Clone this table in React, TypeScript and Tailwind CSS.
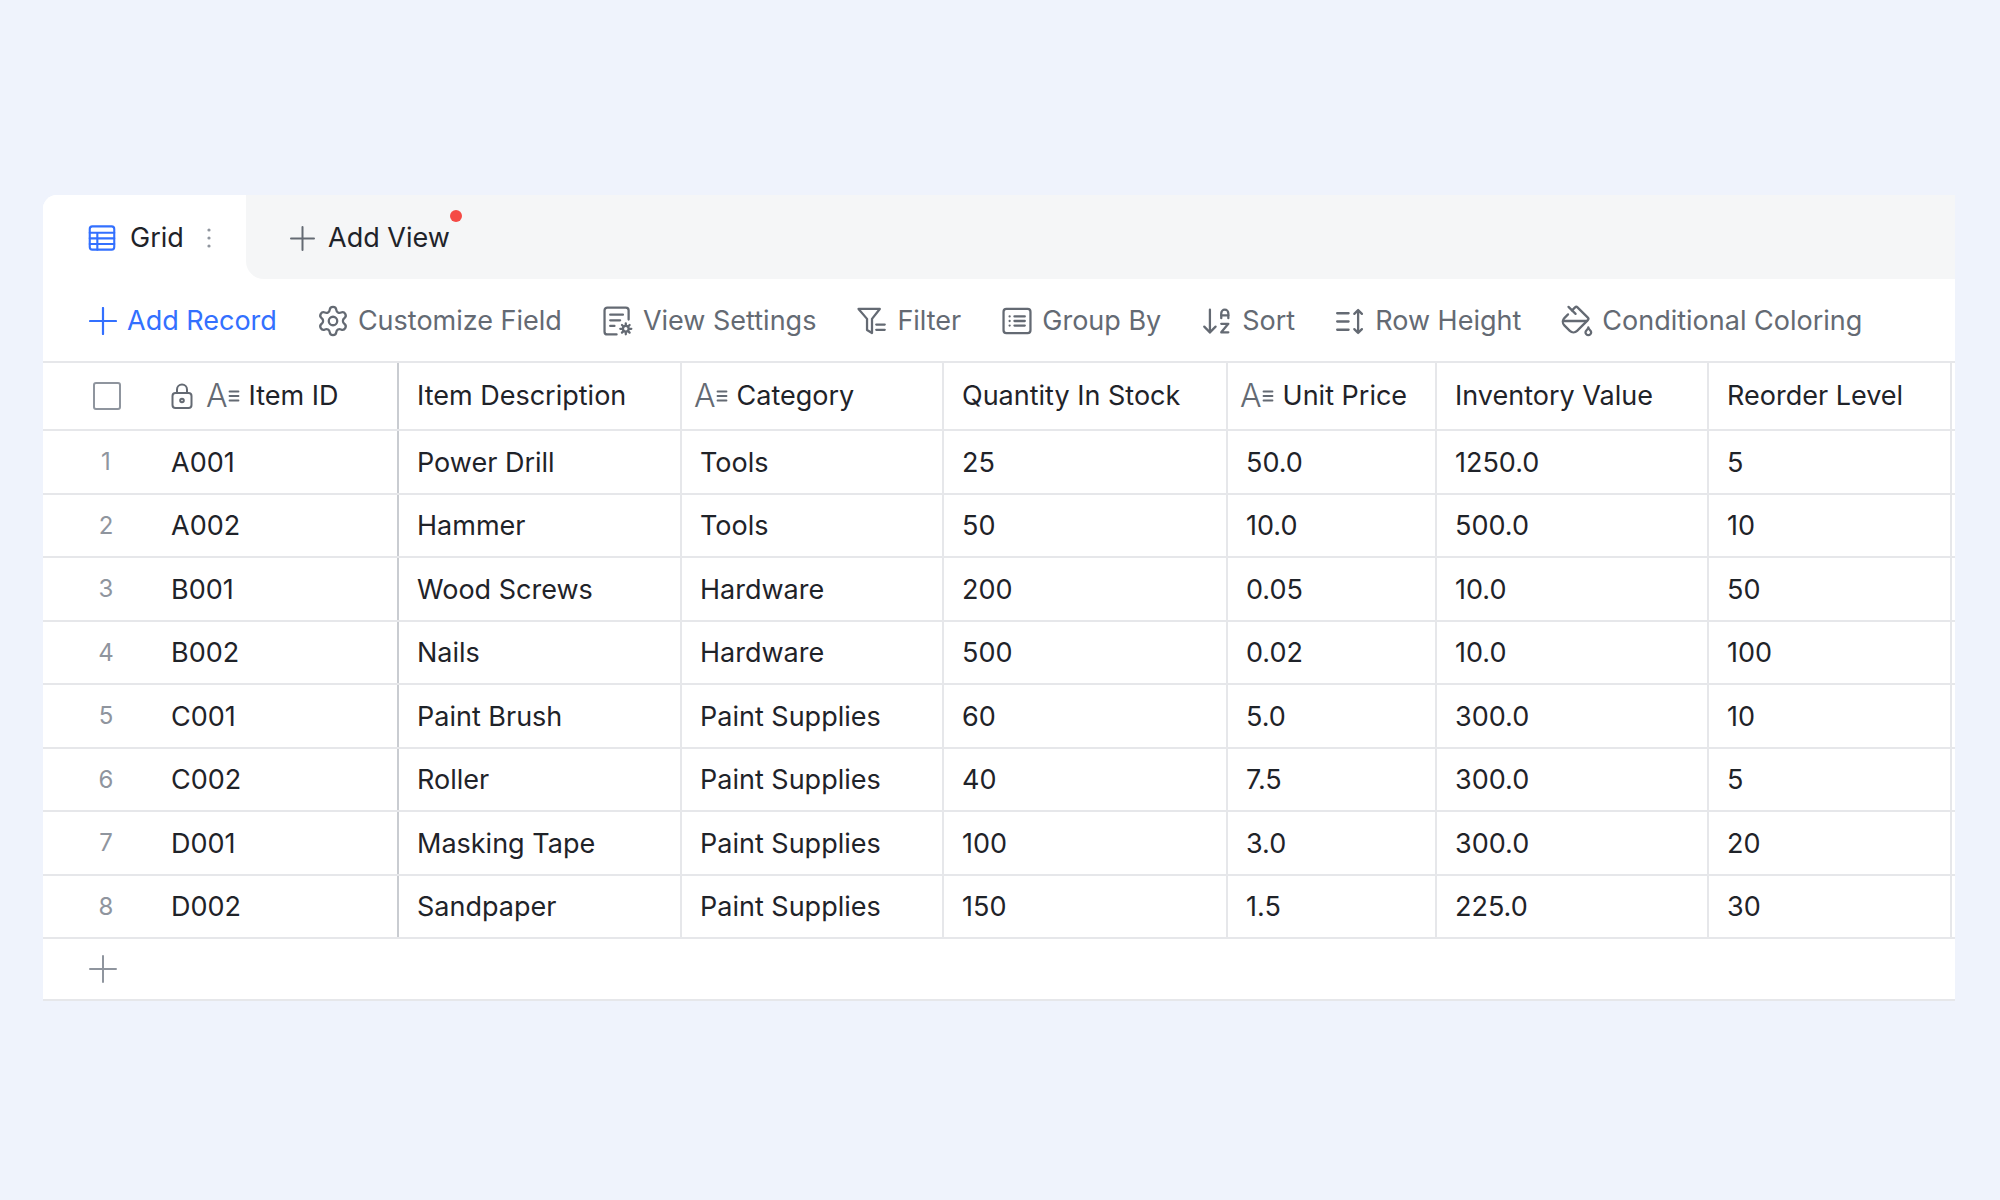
import { Settings, ArrowDownAZ, PaintBucket } from "lucide-react";

const rows = [
  ["A001", "Power Drill", "Tools", "25", "50.0", "1250.0", "5"],
  ["A002", "Hammer", "Tools", "50", "10.0", "500.0", "10"],
  ["B001", "Wood Screws", "Hardware", "200", "0.05", "10.0", "50"],
  ["B002", "Nails", "Hardware", "500", "0.02", "10.0", "100"],
  ["C001", "Paint Brush", "Paint Supplies", "60", "5.0", "300.0", "10"],
  ["C002", "Roller", "Paint Supplies", "40", "7.5", "300.0", "5"],
  ["D001", "Masking Tape", "Paint Supplies", "100", "3.0", "300.0", "20"],
  ["D002", "Sandpaper", "Paint Supplies", "150", "1.5", "225.0", "30"],
];

const cols = "grid grid-cols-[110px_246px_283px_262px_284px_209px_272px_243px]";

function PlusIcon({ size, color, stroke = 2 }: { size: number; color: string; stroke?: number }) {
  return (
    <svg width={size} height={size} viewBox={`0 0 ${size} ${size}`} fill="none" stroke={color} strokeWidth={stroke} strokeLinecap="round">
      <path d={`M1 ${size / 2}h${size - 2}M${size / 2} 1v${size - 2}`} />
    </svg>
  );
}

function GridIcon() {
  return (
    <svg width="28" height="28" viewBox="0 0 24 24" fill="none" stroke="#3370ff" strokeWidth="1.8" strokeLinecap="round" strokeLinejoin="round">
      <rect x="1.5" y="2" width="21" height="20" rx="2.2" />
      <path d="M1.5 7.5h21M1.5 12.3h21M1.5 17.1h21M8 7.5v14.5" />
    </svg>
  );
}

function Kebab() {
  return (
    <svg width="8" height="26" viewBox="0 0 8 26" fill="#8f959e">
      <circle cx="4" cy="5" r="1.6" />
      <circle cx="4" cy="13" r="1.6" />
      <circle cx="4" cy="21" r="1.6" />
    </svg>
  );
}

function ViewSettingsIcon() {
  return (
    <svg width="34" height="34" viewBox="0 0 24 24" fill="none" stroke="currentColor" strokeWidth="1.6" strokeLinecap="round" strokeLinejoin="round">
      <path d="M19.5 11V4.5a2 2 0 0 0-2-2h-13a2 2 0 0 0-2 2v15a2 2 0 0 0 2 2H11" />
      <path d="M6.5 7.5h9M6.5 11.5h7M6.5 15.5h3" />
      <circle cx="17.5" cy="17.5" r="2" />
      <path d="M17.5 13.6v1.4M17.5 20v1.4M13.6 17.5H15M20 17.5h1.4M14.8 14.8l.9.9M19.3 19.3l.9.9M14.8 20.2l.9-.9M19.3 15.7l.9-.9" />
    </svg>
  );
}

function FilterIcon() {
  return (
    <svg width="34" height="34" viewBox="0 0 24 24" fill="none" stroke="currentColor" strokeWidth="1.6" strokeLinecap="round" strokeLinejoin="round">
      <path d="M2.5 3.5h15l-5.5 7v10l-3.5-2.2v-7.8l-6-7z" />
      <path d="M15 14.5h6M15 18.2h6" />
    </svg>
  );
}

function GroupIcon() {
  return (
    <svg width="34" height="34" viewBox="0 0 24 24" fill="none" stroke="currentColor" strokeWidth="1.6" strokeLinecap="round" strokeLinejoin="round">
      <rect x="2.5" y="3.5" width="19" height="17" rx="2" />
      <path d="M6.8 8.8h.01M6.8 12h.01M6.8 15.2h.01M10.2 8.8h7.3M10.2 12h7.3M10.2 15.2h7.3" />
    </svg>
  );
}

function RowHeightIcon() {
  return (
    <svg width="33" height="31" viewBox="0 0 26 24" fill="none" stroke="currentColor" strokeWidth="1.8" strokeLinecap="round" strokeLinejoin="round">
      <path d="M2.5 5.5h9M2.5 12h9M2.5 18.5h9M19 3v18M16 6l3-3 3 3M16 18l3 3 3-3" />
    </svg>
  );
}

function LockIcon() {
  return (
    <svg width="24" height="28" viewBox="0 0 24 28" fill="none" stroke="#646a73" strokeWidth="2" strokeLinecap="round" strokeLinejoin="round">
      <rect x="2.5" y="11" width="19" height="15" rx="3" />
      <path d="M7 11V7.5a5 5 0 0 1 10 0V11" />
      <circle cx="12" cy="18.5" r="1.8" />
    </svg>
  );
}

function TextTypeIcon() {
  return (
    <span className="flex items-center text-[#646a73]">
      <span className="text-[32px] font-light leading-none">A</span>
      <svg width="12" height="24" viewBox="0 0 12 24" fill="none" stroke="currentColor" strokeWidth="1.8" strokeLinecap="round">
        <path d="M1.5 7.5h9M1.5 12h9M1.5 16.5h9" />
      </svg>
    </span>
  );
}

function Tool({ icon, label }: { icon: React.ReactNode; label: string }) {
  return (
    <div className="flex items-center gap-[8px] text-[#646a73]">
      {icon}
      <span>{label}</span>
    </div>
  );
}

export default function App() {
  return (
    <div className="w-[2000px] h-[1200px] bg-[#eff3fc] pt-[195px] pl-[43px] font-['Inter','Liberation_Sans',sans-serif] text-[27px] text-[#1f2329]">
      <div className="w-[1912px] bg-white rounded-tl-[14px]">
        {/* view tabs */}
        <div className="flex h-[84px]">
          <div className="w-[203px] flex items-center pl-[45px] pt-[2px] bg-white rounded-tl-[14px]">
            <GridIcon />
            <span className="ml-[14px]">Grid</span>
            <span className="ml-[21px]">
              <Kebab />
            </span>
          </div>
          <div className="flex-1 flex items-center pl-[44px] pt-[2px] bg-[#f5f6f7] rounded-bl-[18px]">
            <div className="relative flex items-center gap-[13px]">
              <PlusIcon size={25} color="#646a73" stroke={2} />
              <span>Add View</span>
              <span className="absolute -right-[12px] -top-[8px] w-[12px] h-[12px] rounded-full bg-[#f54a45]" />
            </div>
          </div>
        </div>

        {/* toolbar */}
        <div className="h-[82px] flex items-center pl-[46px] pt-[2px] gap-[39px]">
          <div className="flex items-center gap-[10px] text-[#3370ff]">
            <PlusIcon size={28} color="#3370ff" stroke={2.2} />
            <span>Add Record</span>
          </div>
          <Tool icon={<Settings size={34} strokeWidth={1.6} />} label="Customize Field" />
          <Tool icon={<ViewSettingsIcon />} label="View Settings" />
          <Tool icon={<FilterIcon />} label="Filter" />
          <Tool icon={<GroupIcon />} label="Group By" />
          <Tool icon={<ArrowDownAZ size={34} strokeWidth={1.6} />} label="Sort" />
          <Tool icon={<RowHeightIcon />} label="Row Height" />
          <Tool icon={<PaintBucket size={34} strokeWidth={1.6} />} label="Conditional Coloring" />
        </div>

        {/* header */}
        <div className={`${cols} h-[70px] border-t-2 border-b-2 border-[#e6e7ea]`}>
          <div className="flex items-center pl-[50px]">
            <span className="w-[28px] h-[28px] border-2 border-[#8f959e] rounded-[3px]" />
          </div>
          <div className="flex items-center pl-[17px] border-r-2 border-r-[#c9ccd1]">
            <LockIcon />
            <span className="ml-[12px]">
              <TextTypeIcon />
            </span>
            <span className="ml-[9px]">Item ID</span>
          </div>
          <div className="flex items-center pl-[18px] border-r-2 border-[#e6e7ea]">Item Description</div>
          <div className="flex items-center pl-[12px] border-r-2 border-[#e6e7ea]">
            <TextTypeIcon />
            <span className="ml-[9px]">Category</span>
          </div>
          <div className="flex items-center pl-[18px] border-r-2 border-[#e6e7ea]">Quantity In Stock</div>
          <div className="flex items-center pl-[12px] border-r-2 border-[#e6e7ea]">
            <TextTypeIcon />
            <span className="ml-[9px]">Unit Price</span>
          </div>
          <div className="flex items-center pl-[18px] border-r-2 border-[#e6e7ea]">Inventory Value</div>
          <div className="flex items-center pl-[18px] border-r-2 border-[#e6e7ea]">Reorder Level</div>
        </div>

        {/* rows */}
        {rows.map((r, i) => (
          <div key={r[0]} className={`${cols} h-[63.5px] border-b-2 border-[#e6e7ea]`}>
            <div className="flex items-center justify-center pl-[16px] pt-[1px] text-[24px] text-[#8f959e]">{i + 1}</div>
            <div className="flex items-center pl-[18px] pt-[2px] border-r-2 border-r-[#c9ccd1]">{r[0]}</div>
            {r.slice(1).map((v, j) => (
              <div key={j} className="flex items-center pl-[18px] pt-[2px] border-r-2 border-[#e6e7ea]">
                {v}
              </div>
            ))}
          </div>
        ))}

        {/* add row */}
        <div className="h-[62px] flex items-center pl-[46px] border-b-2 border-[#e6e7ea]">
          <PlusIcon size={28} color="#8f959e" stroke={2} />
        </div>
      </div>
    </div>
  );
}
